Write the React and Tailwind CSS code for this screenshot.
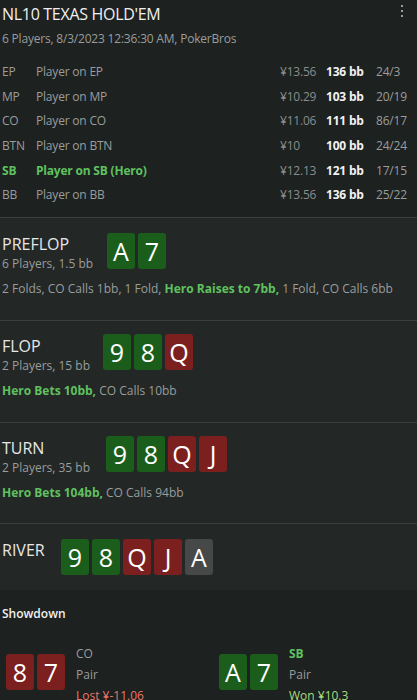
import React from "react";

const players = [
  { pos: "EP", name: "Player on EP", money: "¥13.56", bb: "136 bb", stat: "24/3" },
  { pos: "MP", name: "Player on MP", money: "¥10.29", bb: "103 bb", stat: "20/19" },
  { pos: "CO", name: "Player on CO", money: "¥11.06", bb: "111 bb", stat: "86/17" },
  { pos: "BTN", name: "Player on BTN", money: "¥10", bb: "100 bb", stat: "24/24" },
  { pos: "SB", name: "Player on SB (Hero)", money: "¥12.13", bb: "121 bb", stat: "17/15", hero: true },
  { pos: "BB", name: "Player on BB", money: "¥13.56", bb: "136 bb", stat: "25/22" },
];

const cardColors = {
  g: "bg-[#1b5e1b]",
  r: "bg-[#7b1f1f]",
  x: "bg-[#474848]",
};

function Card({ v, c }) {
  return (
    <div
      className={`${cardColors[c]} w-[28px] h-[36px] rounded-[3px] flex items-center justify-center text-white text-[25px] leading-none`}
    >
      {v}
    </div>
  );
}

function Cards({ list }) {
  return (
    <div className="flex gap-[3px]">
      {list.map((k, i) => (
        <Card key={i} v={k[0]} c={k[1]} />
      ))}
    </div>
  );
}

function Street({ title, sub, cards, gap, children, className }) {
  return (
    <div className={`border-t border-[#3a3f3d] bg-[#232726] px-[2px] ${className}`}>
      <div className="flex items-start">
        <div className={gap}>
          <div className="text-[16px] leading-[20px] text-[#e8e8e8]">{title}</div>
          {sub && <div className="text-[12px] leading-[20px] text-[#9a9d9c]">{sub}</div>}
        </div>
        <Cards list={cards} />
      </div>
      {children && <div className="text-[12px] leading-[18px] mt-[6px] text-[#9a9d9c]">{children}</div>}
    </div>
  );
}

const Hero = ({ children }) => <span className="font-bold text-[#5fc15f]">{children}</span>;

export default function App() {
  return (
    <div className="w-[417px] h-[700px] overflow-hidden bg-[#1d2120] font-['Open_Sans',sans-serif] text-[#e6e6e6]">
      <div className="relative px-[2px] pt-[3px]">
        <div className="text-[16px] leading-[22px] tracking-[-0.3px] text-[#f0f0f0]">NL10 TEXAS HOLD'EM</div>
        <div className="text-[12px] leading-[18px] mt-[5px] tracking-[-0.2px] text-[#9a9d9c]">
          6 Players, 8/3/2023 12:36:30 AM, PokerBros
        </div>
        <div className="absolute right-[14px] top-[5px] flex flex-col gap-[3px]">
          <span className="w-[2px] h-[2px] bg-[#9a9d9c]" />
          <span className="w-[2px] h-[2px] bg-[#9a9d9c]" />
          <span className="w-[2px] h-[2px] bg-[#9a9d9c]" />
        </div>
      </div>

      <div className="px-[2px] pt-[12px] h-[169px] text-[12px] tracking-[-0.2px]">
        {players.map((p) => (
          <div key={p.pos} className="flex items-center h-[24.6px]">
            <div className={`w-[34px] ${p.hero ? "text-[#5fc15f] font-bold" : "text-[#9a9d9c]"}`}>{p.pos}</div>
            <div className={`flex-1 ${p.hero ? "text-[#5fc15f] font-bold" : "text-[#9a9d9c]"}`}>{p.name}</div>
            <div className="w-[46px] text-[#8a8d8c]">{p.money}</div>
            <div className="w-[50px] font-bold text-[#f2f2f2]">{p.bb}</div>
            <div className="w-[39px] text-[#9a9d9c]">{p.stat}</div>
          </div>
        ))}
      </div>

      <Street
        title="PREFLOP"
        sub="6 Players, 1.5 bb"
        cards={[["A", "g"], ["7", "g"]]}
        gap="w-[105px] pt-[1px]"
        className="pt-[15px] h-[103px]"
      >
        2 Folds, CO Calls 1bb, 1 Fold, <Hero>Hero Raises to 7bb,</Hero> 1 Fold, CO Calls 6bb
      </Street>

      <Street
        title="FLOP"
        sub="2 Players, 15 bb"
        cards={[["9", "g"], ["8", "g"], ["Q", "r"]]}
        gap="w-[101px] pt-[2px]"
        className="pt-[13px] h-[102px]"
      >
        <Hero>Hero Bets 10bb,</Hero> CO Calls 10bb
      </Street>

      <Street
        title="TURN"
        sub="2 Players, 35 bb"
        cards={[["9", "g"], ["8", "g"], ["Q", "r"], ["J", "r"]]}
        gap="w-[104px] pt-[2px]"
        className="pt-[13px] h-[101px]"
      >
        <Hero>Hero Bets 104bb,</Hero> CO Calls 94bb
      </Street>

      <Street
        title="RIVER"
        cards={[["9", "g"], ["8", "g"], ["Q", "r"], ["J", "r"], ["A", "x"]]}
        gap="w-[59px] pt-[1px]"
        className="pt-[15px] h-[67px]"
      />

      <div className="px-[2px] pt-[15px]">
        <div className="text-[12px] leading-[18px] font-semibold text-[#f0f0f0]">Showdown</div>
        <div className="flex mt-[20px] text-[12px]">
          <div className="flex w-[215px] pl-[4px]">
            <div className="pt-[11px]">
              <Cards list={[["8", "r"], ["7", "r"]]} />
            </div>
            <div className="ml-[11px] leading-[21px]">
              <div className="text-[#9a9d9c]">CO</div>
              <div className="text-[#9a9d9c]">Pair</div>
              <div className="text-[#e8766b]">Lost ¥-11.06</div>
            </div>
          </div>
          <div className="flex pl-[2px]">
            <div className="pt-[11px]">
              <Cards list={[["A", "g"], ["7", "g"]]} />
            </div>
            <div className="ml-[11px] leading-[21px]">
              <div className="text-[#5fc15f] font-bold">SB</div>
              <div className="text-[#9a9d9c]">Pair</div>
              <div className="text-[#a8dd7c]">Won ¥10.3</div>
            </div>
          </div>
        </div>
      </div>
    </div>
  );
}
